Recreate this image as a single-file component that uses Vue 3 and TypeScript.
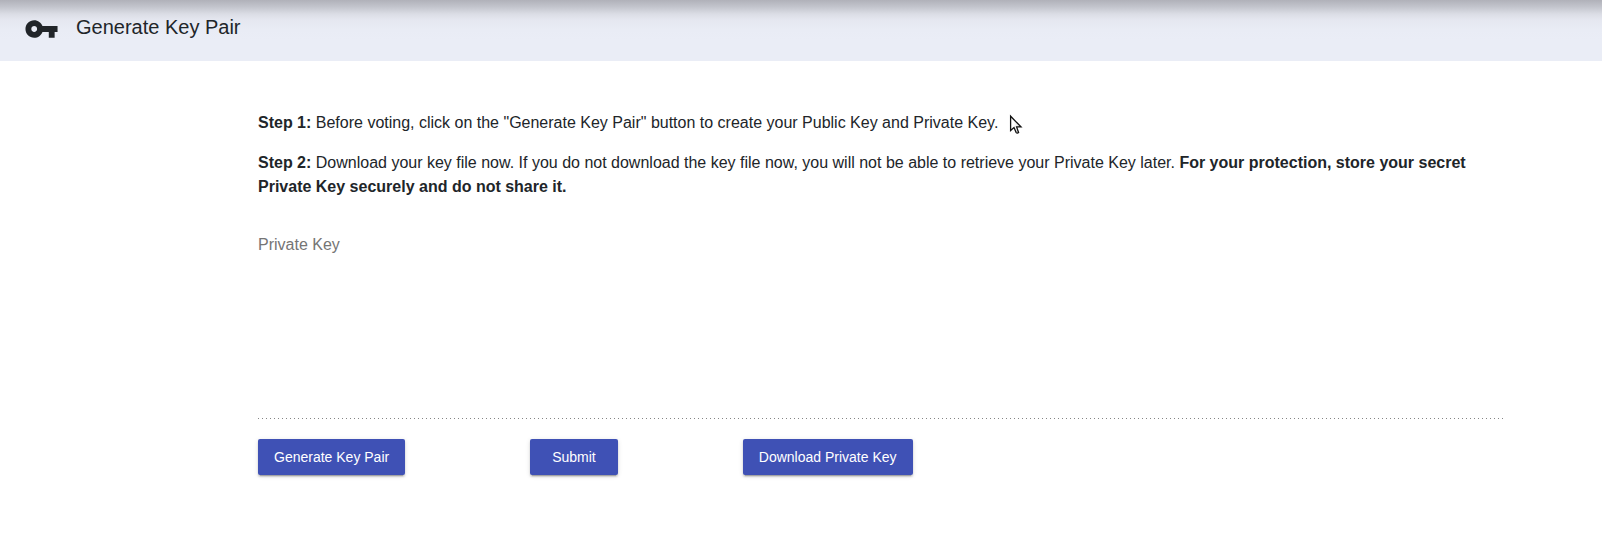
<script setup lang="ts">
const actions: string[] = ['Generate Key Pair', 'Submit', 'Download Private Key']
</script>

<template>
  <div class="page">
    <header class="bar">
      <svg class="key" viewBox="0 0 24 24"><path d="M12.65 10C11.83 7.67 9.61 6 7 6c-3.31 0-6 2.69-6 6s2.69 6 6 6c2.61 0 4.83-1.67 5.65-4H17v4h4v-4h2v-4H12.65zM7 14c-1.1 0-2-.9-2-2s.9-2 2-2 2 .9 2 2-.9 2-2 2z" /></svg>
      <h1>Generate Key Pair</h1>
    </header>
    <main>
      <p><b>Step 1:</b> Before voting, click on the "Generate Key Pair" button to create your Public Key and Private Key.</p>
      <p><b>Step 2:</b> Download your key file now. If you do not download the key file now, you will not be able to retrieve your Private Key later. <b>For your protection, store your secret Private Key securely and do not share it.</b></p>
      <div class="field">Private Key</div>
      <div class="rule"></div>
      <div class="actions">
        <button v-for="label in actions" :key="label" type="button">{{ label }}</button>
      </div>
    </main>
    <svg class="cursor" viewBox="0 0 14 21">
      <defs>
        <linearGradient id="pointer" x1="0" y1="0.5" x2="1" y2="0.5">
          <stop offset="0.3" stop-color="#fff" /><stop offset="1" stop-color="#d4d4d4" />
        </linearGradient>
      </defs>
      <path fill="url(#pointer)" d="M1.6 2.2V16.6L5 13.5L7.2 18.6Q8.2 19.8 9.6 18.6L7.6 12.9H12Z" />
    </svg>
  </div>
</template>

<style scoped>
.page { position: relative; height: 534px; overflow: hidden; background: #fff; color: #212529; font: 16px/24px "Liberation Sans", Arial, sans-serif; }
.bar { display: flex; height: 61px; box-sizing: border-box; padding: 11px 24px 0; background: linear-gradient(#b0b1b9 0, #c3c5cd 7px, #dbdde5 14px, #e5e7f0 20px, #e9ecf5 30px, #eaedf6 40px); }
.key { width: 35px; height: 36px; fill: #212529; flex: none; }
h1 { margin: 0 0 0 17px; font-size: 20px; line-height: 32px; font-weight: 400; color: #212529; }
main { width: 1246px; margin-left: 258px; padding-top: 50px; }
p { margin: 0 0 16px; }
.field { height: 185px; margin-top: 34px; color: #757575; }
.rule { height: 1px; background: repeating-linear-gradient(90deg, #858585 0 1px, transparent 1px 4px); }
.actions { display: flex; gap: 124.8px; margin-top: 20px; }
button { height: 36px; padding: 0 16px; min-width: 88px; border: 0; border-radius: 2px; color: #fff; background: #3f51b5; font: 14px/36px "Liberation Sans", Arial, sans-serif; box-shadow: 0 3px 1px -2px rgba(0,0,0,.2), 0 2px 2px rgba(0,0,0,.14), 0 1px 5px rgba(0,0,0,.12); }
.cursor { position: absolute; left: 1009px; top: 114px; width: 14px; height: 21px; stroke: #111; stroke-width: 1.3; }
</style>
<style>
body { margin: 0; background: #fff; }
</style>
